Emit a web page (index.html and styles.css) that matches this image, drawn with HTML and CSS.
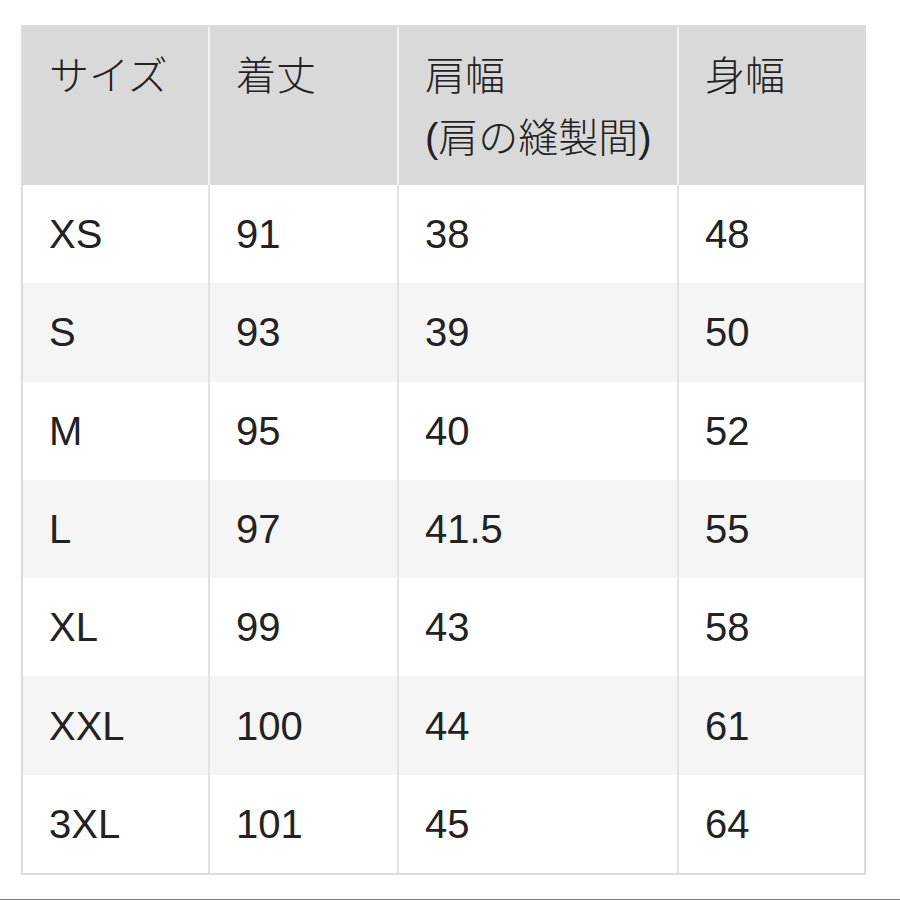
FILE: index.html
```html
<!DOCTYPE html>
<html lang="ja">
<head>
<meta charset="utf-8">
<title>サイズ表</title>
<link rel="stylesheet" href="styles.css">
</head>
<body>
<div class="page">
  <table class="size-table">
    <colgroup>
      <col class="c1"><col class="c2"><col class="c3"><col class="c4">
    </colgroup>
    <thead>
      <tr>
        <th>サイズ</th>
        <th>着丈</th>
        <th>肩幅<br>(肩の縫製間)</th>
        <th>身幅</th>
      </tr>
    </thead>
    <tbody>
      <tr><td>XS</td><td>91</td><td>38</td><td>48</td></tr>
      <tr><td>S</td><td>93</td><td>39</td><td>50</td></tr>
      <tr><td>M</td><td>95</td><td>40</td><td>52</td></tr>
      <tr><td>L</td><td>97</td><td>41.5</td><td>55</td></tr>
      <tr><td>XL</td><td>99</td><td>43</td><td>58</td></tr>
      <tr><td>XXL</td><td>100</td><td>44</td><td>61</td></tr>
      <tr><td>3XL</td><td>101</td><td>45</td><td>64</td></tr>
    </tbody>
  </table>
  <div class="bottom-rule"></div>
</div>
</body>
</html>
```

FILE: styles.css
```css
* { box-sizing: border-box; }

html, body {
  margin: 0;
  padding: 0;
  background: #ffffff;
}

body {
  font-family: "Liberation Sans", "Noto Sans CJK JP", sans-serif;
  color: #222222;
  overflow: hidden;
}

.page {
  padding-top: 25px;
}

.size-table {
  margin-left: 21px;
  width: 845px;
  table-layout: fixed;
  border-collapse: separate;
  border-spacing: 0;
  border: 2px solid #dcdcdc;
  font-size: 40px;
}

.c1 { width: 185px; }
.c2 { width: 189px; }
.c3 { width: 280px; }
.c4 { width: 187px; }

.size-table th {
  background: #d9d9d9;
  font-weight: 300;
  text-align: left;
  vertical-align: top;
  line-height: 62px;
  height: 158px;
  padding: 18px 0 0 26px;
}

.size-table th + th {
  border-left: 2px solid #f4f4f4;
}

.size-table td {
  height: 98.3px;
  padding: 0 0 0 26px;
  vertical-align: middle;
  line-height: 1;
}

.size-table td + td {
  border-left: 2px solid #e2e2e2;
}

.size-table tbody tr:nth-child(even) td {
  background: #f5f5f5;
}

.bottom-rule {
  margin-top: 24px;
  height: 2px;
  background: #7c7c7c;
}
```
